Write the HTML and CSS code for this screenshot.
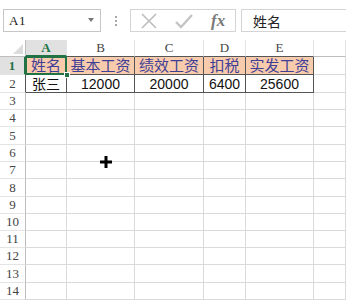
FILE: index.html
```html
<!DOCTYPE html>
<html lang="zh">
<head>
<meta charset="utf-8">
<link rel="stylesheet" href="styles.css">
</head>
<body>
<div class="app">
  <div class="fbar">
    <div class="namebox">
      <span class="nb-text">A1</span>
      <span class="nb-arrow"></span>
    </div>
    <div class="dots"><i></i><i></i><i></i></div>
    <div class="btns">
      <svg class="ico" width="18" height="18" viewBox="0 0 18 18"><path d="M2 2 L16 16 M16 2 L2 16" stroke="#bdbdbd" stroke-width="1.6" fill="none"/></svg>
      <svg class="ico" width="20" height="18" viewBox="0 0 20 18"><path d="M2 10 L7 15 L18 3" stroke="#c4c4c4" stroke-width="2.4" fill="none"/></svg>
      <span class="fx">fx</span>
    </div>
    <div class="input">姓名</div>
  </div>
  <div class="grid">
    <div class="corner"><span class="tri"></span></div>
    <div class="ch sel">A</div>
    <div class="ch tb">B</div>
    <div class="ch tb">C</div>
    <div class="ch tb">D</div>
    <div class="ch tb">E</div>
    <div class="ch last"></div>

    <div class="rh sel h18">1</div>
    <div class="c hd active">姓名<span class="handle"></span></div>
    <div class="c hd">基本工资</div>
    <div class="c hd">绩效工资</div>
    <div class="c hd">扣税</div>
    <div class="c hd">实发工资</div>
    <div class="c"></div>

    <div class="rh h18 tbr">2</div>
    <div class="c dt">张三</div>
    <div class="c dt">12000</div>
    <div class="c dt">20000</div>
    <div class="c dt">6400</div>
    <div class="c dt">25600</div>
    <div class="c"></div>
  </div>
  <div class="grid body">
    <div class="rh h17">3</div><div class="c"></div><div class="c"></div><div class="c"></div><div class="c"></div><div class="c"></div><div class="c"></div>
    <div class="rh h17">4</div><div class="c"></div><div class="c"></div><div class="c"></div><div class="c"></div><div class="c"></div><div class="c"></div>
    <div class="rh h18">5</div><div class="c"></div><div class="c"></div><div class="c"></div><div class="c"></div><div class="c"></div><div class="c"></div>
    <div class="rh h17">6</div><div class="c"></div><div class="c"></div><div class="c"></div><div class="c"></div><div class="c"></div><div class="c"></div>
    <div class="rh h17">7</div><div class="c"></div><div class="c"></div><div class="c"></div><div class="c"></div><div class="c"></div><div class="c"></div>
    <div class="rh h18">8</div><div class="c"></div><div class="c"></div><div class="c"></div><div class="c"></div><div class="c"></div><div class="c"></div>
    <div class="rh h17">9</div><div class="c"></div><div class="c"></div><div class="c"></div><div class="c"></div><div class="c"></div><div class="c"></div>
    <div class="rh h17">10</div><div class="c"></div><div class="c"></div><div class="c"></div><div class="c"></div><div class="c"></div><div class="c"></div>
    <div class="rh h17">11</div><div class="c"></div><div class="c"></div><div class="c"></div><div class="c"></div><div class="c"></div><div class="c"></div>
    <div class="rh h17">12</div><div class="c"></div><div class="c"></div><div class="c"></div><div class="c"></div><div class="c"></div><div class="c"></div>
    <div class="rh h18">13</div><div class="c"></div><div class="c"></div><div class="c"></div><div class="c"></div><div class="c"></div><div class="c"></div>
    <div class="rh h17">14</div><div class="c"></div><div class="c"></div><div class="c"></div><div class="c"></div><div class="c"></div><div class="c"></div>
    <svg class="cursor" width="12" height="12" viewBox="0 0 12 12"><path d="M4.5 0 H7.5 V4.5 H12 V7.5 H7.5 V12 H4.5 V7.5 H0 V4.5 H4.5 Z" fill="#000"/></svg>
  </div>
</div>
</body>
</html>
```
FILE: styles.css
```css
* { box-sizing: border-box; }
html, body { margin: 0; padding: 0; background: #fff; }
body { width: 346px; height: 300px; overflow: hidden; font-family: "Liberation Sans", "Noto Sans CJK SC", sans-serif; }
.app { width: 346px; height: 300px; display: flex; flex-direction: column; }

.fbar { height: 40px; display: flex; align-items: flex-start; padding-top: 9px; padding-left: 3px; }
.namebox { width: 98px; height: 23px; border: 1px solid #c6c6c6; display: flex; align-items: center; justify-content: space-between; padding: 0 6px 0 5px; }
.nb-text { font-family: "Liberation Serif", serif; font-size: 13px; color: #222; letter-spacing: 0.5px; }
.nb-arrow { width: 0; height: 0; border-left: 3.5px solid transparent; border-right: 3.5px solid transparent; border-top: 4px solid #777; margin-top: -2px; }
.dots { width: 29px; height: 23px; display: flex; flex-direction: column; align-items: center; justify-content: center; gap: 2px; }
.dots i { width: 2px; height: 2px; background: #a8a8a8; display: block; }
.btns { width: 106px; height: 23px; border: 1px solid #d4d4d4; display: flex; align-items: center; padding-left: 9px; gap: 16px; }
.fx { font-family: "Liberation Serif", serif; font-style: italic; font-weight: bold; font-size: 17px; color: #7a7a7a; margin-left: 1px; line-height: 1; }
.input { flex: 1; margin-left: 5px; height: 23px; border: 1px solid #d4d4d4; border-right: none; font-size: 14px; color: #222; padding-left: 11px; display: flex; align-items: center; }

.grid { display: grid; grid-template-columns: 26px 41px 68px 69px 42px 68px 1fr; position: relative; }
.grid > div { border-right: 1px solid #dadada; border-bottom: 1px solid #dadada; }
.corner { height: 17px; border-color: #bdbdbd !important; position: relative; }
.tri { position: absolute; right: 2px; bottom: 2px; width: 0; height: 0; border-left: 10px solid transparent; border-bottom: 10px solid #dcdcdc; }
.ch { height: 17px; font-family: "Liberation Serif", serif; font-size: 13px; color: #444; display: flex; align-items: center; justify-content: center; border-bottom-color: #bdbdbd !important; border-right-color: #e4e4e4 !important; }
.ch.tb { border-bottom-color: #555 !important; }
.ch.sel { background: #e1e1e1; color: #217346; font-weight: bold; border-bottom: 2px solid #217346 !important; }
.rh { font-family: "Liberation Serif", serif; font-size: 13px; color: #444; display: flex; align-items: center; justify-content: center; border-right-color: #bdbdbd !important; border-bottom-color: #e4e4e4 !important; }
.rh.sel { background: #e1e1e1; color: #217346; font-weight: bold; border-right: 2px solid #217346 !important; }
.rh.tbr { border-right-color: #555 !important; }
.h17 { height: 17px; }
.h18 { height: 18px; }
.c { font-size: 14px; display: flex; align-items: center; justify-content: center; line-height: 1; }
.c.hd { background: #f8cbad; color: #3f3f95; border-right-color: #555 !important; border-bottom-color: #555 !important; font-size: 15px; }
.c.dt { color: #111; border-right-color: #555 !important; border-bottom-color: #555 !important; }
.c.dt:first-of-type { font-size: 15px; }
.grid > .c.dt:nth-child(2) { font-size: 15px; }
.active { position: relative; }
.active::before { content: ""; position: absolute; left: -1px; top: -1px; right: -1px; bottom: -1px; border: 2px solid #217346; }
.handle { position: absolute; right: -4px; bottom: -4px; width: 6px; height: 6px; background: #217346; border: 1px solid #fff; z-index: 2; }
.cursor { position: absolute; left: 100px; top: 63px; }
```
